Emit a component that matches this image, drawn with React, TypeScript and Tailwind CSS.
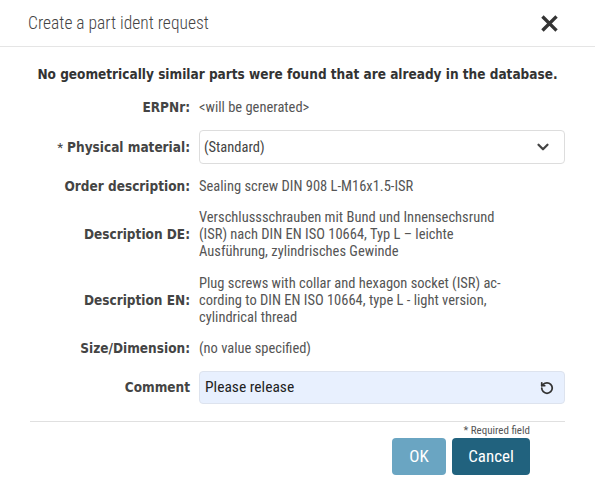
import { ChevronDown, RotateCcw } from 'lucide-react';

function Row({ label, children, required }: { label: string; children: React.ReactNode; required?: boolean }) {
  return (
    <>
      <div className="flex items-center justify-end text-right font-['DejaVu_Sans_Condensed',sans-serif] text-[13.5px] font-bold text-[#444]">
        {required && <span className="mr-1 font-['Roboto_Condensed',sans-serif] font-normal">*</span>}
        {label}
      </div>
      <div className="flex items-center text-[#555]">{children}</div>
    </>
  );
}

export default function App() {
  return (
    <div className="h-[489px] w-[595px] bg-white font-['Roboto_Condensed','DejaVu_Sans_Condensed',sans-serif] text-[14.5px] leading-[17px]">
      {/* Header */}
      <div className="flex h-[47px] items-center justify-between border-b border-[#e5e5e5] pl-[28px] pr-[37px]">
        <span className="text-[17.5px] font-light text-[#444]">Create a part ident request</span>
        <svg width="17" height="17" viewBox="0 0 16 16" className="text-[#333]">
          <path d="M2.5 2.5 L13.5 13.5 M13.5 2.5 L2.5 13.5" stroke="currentColor" strokeWidth="3.2" strokeLinecap="square" />
        </svg>
      </div>

      <div className="px-[30px] pt-[19px]">
        <p className="text-center font-['DejaVu_Sans_Condensed',sans-serif] text-[13.5px] font-bold text-[#333]">
          No geometrically similar parts were found that are already in the database.
        </p>

        <div className="mt-[16px] grid grid-cols-[160px_1fr] gap-x-[9px] gap-y-[14px]">
          <Row label="ERPNr:">&lt;will be generated&gt;</Row>

          <Row label="Physical material:" required>
            <div className="flex h-[34px] w-full items-center justify-between rounded border border-[#ddd] bg-white pl-[4px] pr-[12px] text-[#444]">
              <span>(Standard)</span>
              <ChevronDown size={18} strokeWidth={3} className="text-[#444]" />
            </div>
          </Row>

          <Row label="Order description:">Sealing screw DIN 908 L-M16x1.5-ISR</Row>

          <Row label="Description DE:">
            <span>
              Verschlussschrauben mit Bund und Innensechsrund
              <br />
              (ISR) nach DIN EN ISO 10664, Typ L – leichte
              <br />
              Ausführung, zylindrisches Gewinde
            </span>
          </Row>

          <Row label="Description EN:">
            <span className="pt-[1px]">
              Plug screws with collar and hexagon socket (ISR) ac-
              <br />
              cording to DIN EN ISO 10664, type L - light version,
              <br />
              cylindrical thread
            </span>
          </Row>

          <Row label="Size/Dimension:">(no value specified)</Row>

          <div className="flex items-center justify-end font-['DejaVu_Sans_Condensed',sans-serif] text-[13.5px] font-bold text-[#444]">
            Comment
          </div>
          <div className="flex h-[33px] items-center justify-between rounded border border-[#dde3ee] bg-[#e8f0fe] pl-[5px] pr-[10px] text-[15.5px] text-[#222]">
            <span>Please release</span>
            <RotateCcw size={14} strokeWidth={3} className="text-[#333]" />
          </div>
        </div>

        <div className="mt-[17px] border-t border-[#e0e0e0]" />

        <div className="flex flex-col items-end pr-[35px]">
          <span className="mt-[2px] text-[11px] leading-[13px] text-[#555]">* Required field</span>
          <div className="mt-[1px] flex gap-[6px]">
            <button className="h-[37px] w-[54px] rounded bg-[#6aa5c2] text-[17px] text-white">OK</button>
            <button className="h-[37px] w-[78px] rounded bg-[#21627e] text-[17px] text-white">Cancel</button>
          </div>
        </div>
      </div>
    </div>
  );
}
